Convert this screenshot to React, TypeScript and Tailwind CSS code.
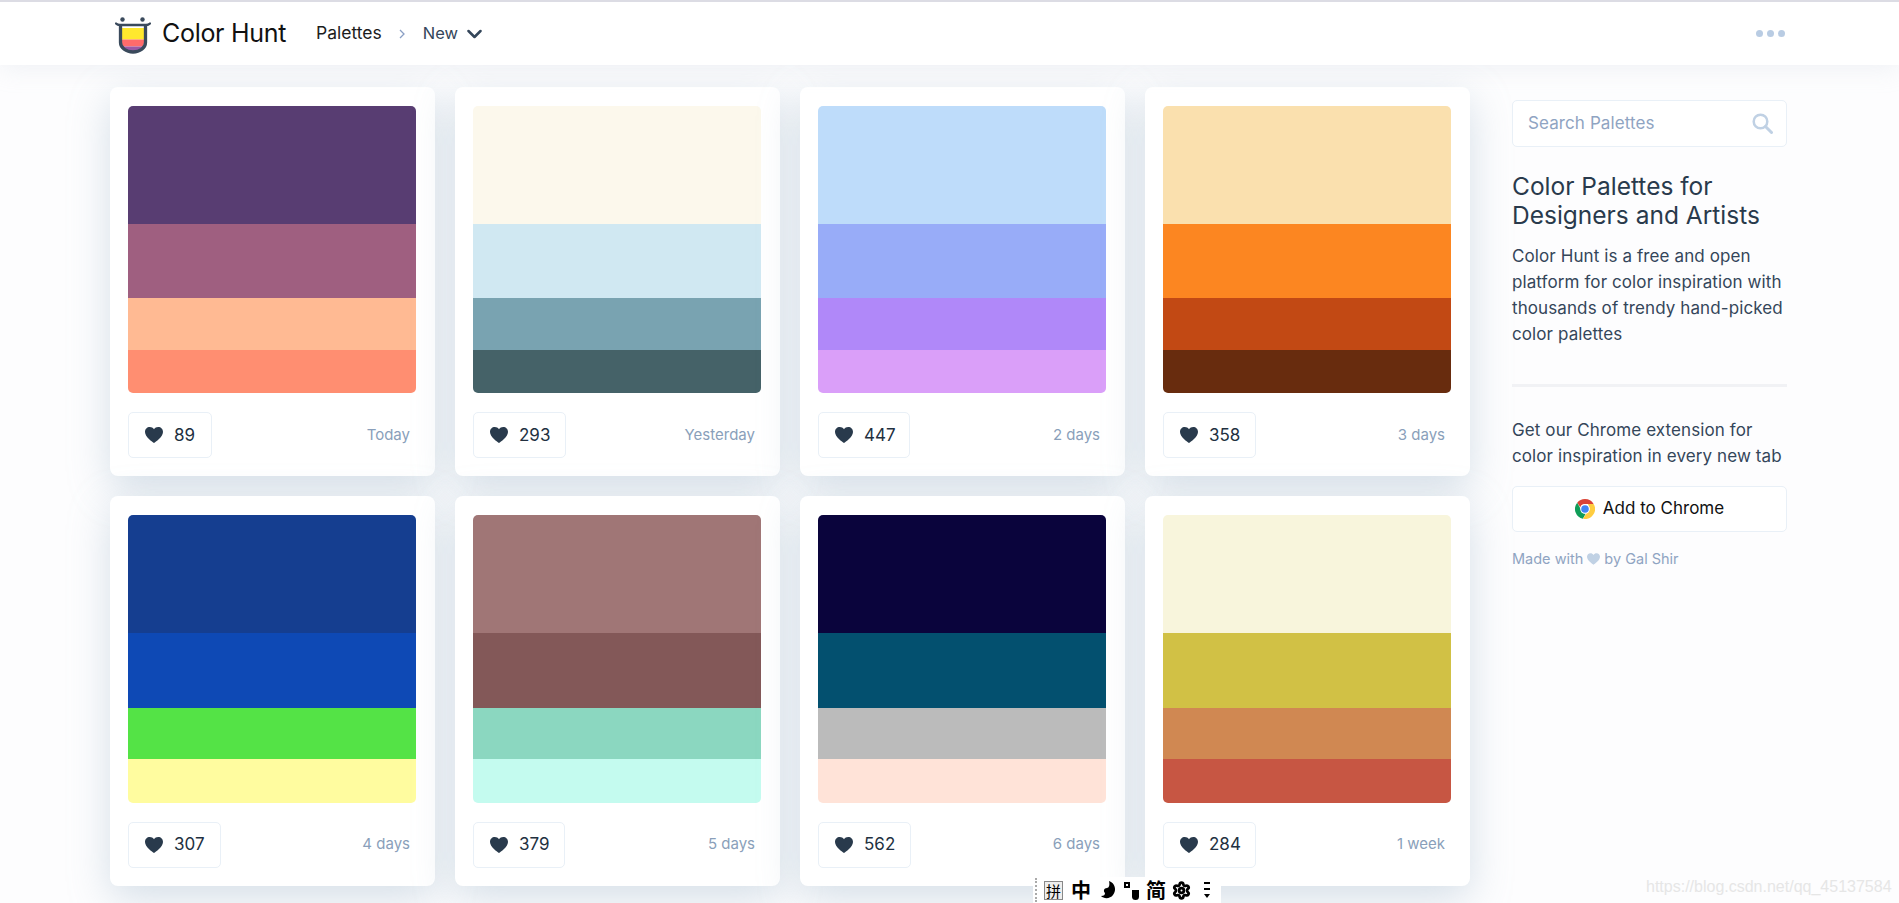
import { Settings } from "lucide-react";

const palettes = [
  { colors: ["#583d72", "#9f5f80", "#ffba93", "#ff8e71"], likes: "89", date: "Today", badge: "w-[84px]" },
  { colors: ["#fcf8ec", "#d0e8f2", "#79a3b1", "#456268"], likes: "293", date: "Yesterday", badge: "w-[93px]" },
  { colors: ["#bedcfa", "#98acf8", "#b088f9", "#da9ff9"], likes: "447", date: "2 days", badge: "w-[92px]" },
  { colors: ["#fae0ae", "#fc8621", "#c24914", "#682c0e"], likes: "358", date: "3 days", badge: "w-[93px]" },
  { colors: ["#153e90", "#0e49b5", "#54e346", "#fffc9f"], likes: "307", date: "4 days", badge: "w-[93px]" },
  { colors: ["#a07676", "#835858", "#8bd7c0", "#c4fbef"], likes: "379", date: "5 days", badge: "w-[92px]" },
  { colors: ["#0a043c", "#03506f", "#bbbbbb", "#ffe3d8"], likes: "562", date: "6 days", badge: "w-[93px]" },
  { colors: ["#f8f5dc", "#d1c145", "#d08852", "#c75643"], likes: "284", date: "1 week", badge: "w-[93px]" },
];

function Heart({ className }: { className: string }) {
  return (
    <svg viewBox="0 0 18 16" className={className} fill="currentColor">
      <path d="M9 16C7.6 14.8 0 9.9 0 4.9 0 2.1 2.1 0 4.8 0 6.5 0 8.1.9 9 2.3 9.9.9 11.5 0 13.2 0 15.9 0 18 2.1 18 4.9 18 9.9 10.4 14.8 9 16Z" />
    </svg>
  );
}

function Logo() {
  return (
    <svg viewBox="0 0 36 40" className="h-[40px] w-[36px] shrink-0">
      <clipPath id="cup">
        <path d="M7 12h22v17a11 9 0 0 1-22 0Z" />
      </clipPath>
      <g clipPath="url(#cup)">
        <rect x="7" y="14" width="22" height="11.5" fill="#ffe82e" />
        <rect x="7" y="25.5" width="22" height="7" fill="#ff6b6b" />
        <rect x="7" y="32.5" width="22" height="6" fill="#9b59a6" />
      </g>
      <path d="M5.500 12v16.500a12.500 9.500 0 0 0 25 0V12" fill="none" stroke="#3a4a5c" strokeWidth="3.300" />
      <path d="M1 9.500c1 1 2 1.500 4 1.500h26c2 0 3-.5 4-1.500" fill="none" stroke="#3a4a5c" strokeWidth="2.300" strokeLinecap="round" />
      <circle cx="7.500" cy="5.500" r="2.200" fill="#3a4a5c" />
      <circle cx="27.500" cy="5.500" r="2.200" fill="#3a4a5c" />
    </svg>
  );
}

function ChromeIcon() {
  return (
    <svg viewBox="0 0 20 20" className="h-[20px] w-[20px] shrink-0">
      <path d="M10 0a10 10 0 0 1 8.660 5H10a5 5 0 0 0-4.700 3.300L2.200 3.700A10 10 0 0 1 10 0Z" fill="#db4437" />
      <path d="M2.200 3.700 6 10.500a4.500 4.500 0 0 0 4.800 4l-2.900 5.300A10 10 0 0 1 2.200 3.700Z" fill="#0f9d58" />
      <path d="M18.660 5A10 10 0 0 1 8 19.800l3.600-5.700A4.500 4.500 0 0 0 13.500 7l-.5-2Z" fill="#ffcd40" />
      <circle cx="10" cy="10" r="4.800" fill="#fff" />
      <circle cx="10" cy="10" r="3.800" fill="#4285f4" />
    </svg>
  );
}

function PaletteCard({ colors, likes, date, badge }: (typeof palettes)[number]) {
  return (
    <div className="rounded-[8px] bg-white pl-[18px] pr-[19px] pt-[19px] pb-[18px] shadow-[0_12px_40px_rgba(148,173,194,0.38)]">
      <div className="flex h-[287.3px] flex-col overflow-hidden rounded-[5px]">
        <div className="h-[118.1px]" style={{ backgroundColor: colors[0] }} />
        <div className="h-[74.3px]" style={{ backgroundColor: colors[1] }} />
        <div className="h-[51.6px]" style={{ backgroundColor: colors[2] }} />
        <div className="h-[43.3px]" style={{ backgroundColor: colors[3] }} />
      </div>
      <div className="mt-[19px] flex items-center justify-between pr-[6px]">
        <div className={`flex h-[46px] items-center gap-[11px] rounded-[5px] border border-[#e9f0f7] pl-[16px] text-[17px] text-[#22303f] ${badge}`}>
          <Heart className="h-[16px] w-[18px] shrink-0 text-[#293a4c]" />
          <span>{likes}</span>
        </div>
        <span className="text-[15px] text-[#8a9fba]">{date}</span>
      </div>
    </div>
  );
}

export default function App() {
  return (
    <div className="relative h-[903px] w-[1899px] overflow-hidden bg-[#fdfdfe] font-['Inter',sans-serif]">
      <header className="relative z-10 flex h-[65px] items-center border-t-2 border-[#dcdce4] bg-white pl-[115px] pr-[114px] shadow-[0_4px_24px_rgba(190,200,215,0.22)]">
        <Logo />
        <span className="ml-[11px] text-[25px] tracking-[-0.3px] text-[#111]">Color Hunt</span>
        <span className="ml-[30px] text-[17.5px] text-[#1c1c1c]">Palettes</span>
        <svg viewBox="0 0 6 10" className="ml-[17px] h-[10px] w-[6px] text-[#8a9fc4]" fill="none" stroke="currentColor" strokeWidth="1.300">
          <path d="M1 1l4 4-4 4" />
        </svg>
        <span className="ml-[18px] text-[16.5px] text-[#34465a]">New</span>
        <svg viewBox="0 0 15 10" className="ml-[9px] h-[10px] w-[15px] text-[#34465a]" fill="none" stroke="currentColor" strokeWidth="2.500" strokeLinecap="round" strokeLinejoin="round">
          <path d="M1.500 2l6 6 6-6" />
        </svg>
        <div className="ml-auto flex gap-[4px]">
          <span className="h-[7px] w-[7px] rounded-full bg-[#b9cce3]" />
          <span className="h-[7px] w-[7px] rounded-full bg-[#b9cce3]" />
          <span className="h-[7px] w-[7px] rounded-full bg-[#b9cce3]" />
        </div>
      </header>

      <main className="flex pl-[110px] pt-[22px]">
        <div className="grid w-[1360px] grid-cols-[repeat(4,325px)] gap-[20px]">
          {palettes.map((palette) => (
            <PaletteCard key={palette.likes} {...palette} />
          ))}
        </div>

        <aside className="relative ml-[42px] w-[275px] pt-[13px]">
          <div className="flex h-[47px] items-center justify-between rounded-[5px] border border-[#e9f0f7] bg-white pl-[15px] pr-[13px]">
            <span className="text-[17px] tracking-[0.1px] text-[#8fa4c2]">Search Palettes</span>
            <svg viewBox="0 0 21 21" className="h-[21px] w-[21px] text-[#c0d1e4]" fill="none" stroke="currentColor" strokeWidth="2.500" strokeLinecap="round">
              <circle cx="8.500" cy="8.500" r="6.800" />
              <path d="M13.500 13.500l6 6" strokeWidth="3" />
            </svg>
          </div>
          <h2 className="mt-[25px] text-[24.5px] leading-[29px] text-[#293a4c]">Color Palettes for Designers and Artists</h2>
          <p className="mt-[13px] text-[17px] leading-[26px] tracking-[0.1px] text-[#34465a]">
            Color Hunt is a free and open platform for color inspiration with thousands of trendy hand-picked color palettes
          </p>
          <div className="mt-[37px] h-[3px] bg-[#f1f2f5]" />
          <p className="mt-[30px] text-[17px] leading-[26px] tracking-[0.1px] text-[#34465a]">
            Get our Chrome extension for color inspiration in every new tab
          </p>
          <button className="mt-[17px] flex h-[46px] w-full items-center justify-center gap-[8px] rounded-[5px] border border-[#e9f0f7] bg-white text-[17px] text-[#111]">
            <ChromeIcon />
            <span>Add to Chrome</span>
          </button>
          <div className="mt-[16px] flex items-center gap-[4px] text-[14.5px] text-[#8fa4c2]">
            <span>Made with</span>
            <Heart className="h-[12px] w-[13px] text-[#c0d1e4]" />
            <span>by Gal Shir</span>
          </div>
        </aside>
      </main>

      {/* Input method toolbar lying over the page */}
      <div className="absolute bottom-0 left-[1033px] z-20 flex h-[26px] w-[188px] items-center bg-white pl-[2px] font-['Noto_Sans_CJK_SC',sans-serif] font-bold text-black">
        <div className="h-[24px] w-[2px] border-l-2 border-dotted border-[#aaa]" />
        <span className="ml-[7px] flex h-[19px] w-[19px] items-center justify-center border border-[#888] bg-[#eee] text-[15px] font-normal leading-none">拼</span>
        <span className="ml-[8px] w-[20px] text-[20px] leading-none">中</span>
        <svg viewBox="0 0 16 18" className="ml-[8px] h-[18px] w-[18px]" fill="black">
          <path d="M9 0c6 2 8 9 4 14-3 4-9 4-12 1 3 0 4-1 4-3-2-2-1-5 2-5 2 0 3-3 2-7Z" />
        </svg>
        <span className="ml-[7px] mb-[11px] h-[6px] w-[6px] border-2 border-black" />
        <span className="ml-[2px] mt-[10px] h-[10px] w-[7px] rounded-b-full rounded-t-[3px] bg-black" />
        <span className="ml-[7px] w-[20px] text-[20px] leading-none">简</span>
        <Settings className="ml-[6px] h-[19px] w-[19px]" strokeWidth={3.5} />
        <div className="ml-[13px] flex flex-col items-center gap-[4px]">
          <span className="h-[2px] w-[6px] bg-black" />
          <span className="h-[2px] w-[6px] bg-black" />
          <span className="h-0 w-0 border-x-[3px] border-t-[4px] border-x-transparent border-t-black" />
        </div>
      </div>

      {/* CSDN watermark */}
      <span className="absolute left-[1646px] top-[875px] z-20 font-['Liberation_Sans',sans-serif] text-[16px] text-[#e6e6e6]">
        https://blog.csdn.net/qq_45137584
      </span>
    </div>
  );
}
